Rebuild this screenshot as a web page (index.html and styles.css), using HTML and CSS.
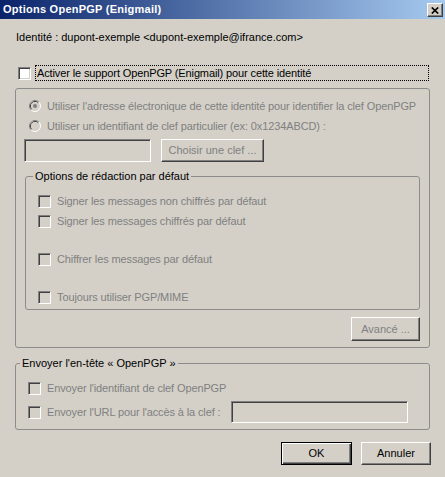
FILE: index.html
```html
<!DOCTYPE html>
<html lang="fr">
<head>
<meta charset="utf-8">
<title>Options OpenPGP (Enigmail)</title>
<link rel="stylesheet" href="styles.css">
</head>
<body>
<div class="titlebar">
  <span class="title">Options OpenPGP (Enigmail)</span>
  <span class="close"><svg width="8" height="7" viewBox="0 0 8 7"><path d="M0.8 0.5 L7.2 6.5 M7.2 0.5 L0.8 6.5" stroke="#000" stroke-width="1.7" fill="none"/></svg></span>
</div>

<div class="identity">Identité : dupont-exemple &lt;dupont-exemple@ifrance.com&gt;</div>

<div class="row enable"><span class="cb on"></span><span class="label focus">Activer le support OpenPGP (Enigmail) pour cette identité</span></div>

<div class="group main">
  <div class="row radio-row">
    <svg class="radio" width="12" height="12" viewBox="0 0 12 12">
      <path d="M2.11 9.89 A5.5 5.5 0 0 1 9.89 2.11" stroke="#808080" fill="none"/>
      <path d="M9.89 2.11 A5.5 5.5 0 0 1 2.11 9.89" stroke="#ffffff" fill="none"/>
      <path d="M2.82 9.18 A4.5 4.5 0 0 1 9.18 2.82" stroke="#404040" fill="none"/>
      <circle cx="6" cy="6" r="4" fill="#d4d0c8"/>
      <circle cx="6" cy="6" r="2" fill="#808080"/>
    </svg>
    <span class="label dis">Utiliser l'adresse électronique de cette identité pour identifier la clef OpenPGP</span>
  </div>
  <div class="row radio-row second">
    <svg class="radio" width="12" height="12" viewBox="0 0 12 12">
      <path d="M2.11 9.89 A5.5 5.5 0 0 1 9.89 2.11" stroke="#808080" fill="none"/>
      <path d="M9.89 2.11 A5.5 5.5 0 0 1 2.11 9.89" stroke="#ffffff" fill="none"/>
      <path d="M2.82 9.18 A4.5 4.5 0 0 1 9.18 2.82" stroke="#404040" fill="none"/>
      <circle cx="6" cy="6" r="4" fill="#d4d0c8"/>
    </svg>
    <span class="label dis">Utiliser un identifiant de clef particulier (ex: 0x1234ABCD) :</span>
  </div>
  <div class="keyrow">
    <span class="field keyfield"></span>
    <span class="btn disabled choose">Choisir une clef ...</span>
  </div>

  <fieldset class="group inner">
    <legend>Options de rédaction par défaut</legend>
    <div class="row cbrow first"><span class="cb"></span><span class="label dis">Signer les messages non chiffrés par défaut</span></div>
    <div class="row cbrow"><span class="cb"></span><span class="label dis">Signer les messages chiffrés par défaut</span></div>
    <div class="row cbrow far"><span class="cb"></span><span class="label dis">Chiffrer les messages par défaut</span></div>
    <div class="row cbrow far"><span class="cb"></span><span class="label dis">Toujours utiliser PGP/MIME</span></div>
  </fieldset>

  <div class="advrow"><span class="btn disabled adv">Avancé ...</span></div>
</div>

<fieldset class="group send">
  <legend>Envoyer l'en-tête « OpenPGP »</legend>
  <div class="row cbrow first"><span class="cb"></span><span class="label dis">Envoyer l'identifiant de clef OpenPGP</span></div>
  <div class="row cbrow url"><span class="cb"></span><span class="label dis">Envoyer l'URL pour l'accès à la clef :</span><span class="field urlfield"></span></div>
</fieldset>

<div class="buttons">
  <span class="btn default">OK</span>
  <span class="btn cancel">Annuler</span>
</div>
</body>
</html>
```

FILE: styles.css
```css
* { box-sizing: border-box; }
html, body { margin: 0; padding: 0; }
body {
  width: 445px;
  height: 477px;
  overflow: hidden;
  background: #d4d0c8;
  color: #000;
  font: 11px/13px "Liberation Sans", Arial, sans-serif;
}

.titlebar {
  height: 19px;
  display: flex;
  justify-content: space-between;
  align-items: flex-start;
  padding: 0 2px 0 3px;
  background: linear-gradient(to right, #0a246a, #a6caf0);
}
.title {
  color: #fff;
  font-weight: bold;
  font-size: 11px;
  letter-spacing: 0.25px;
  line-height: 19px;
}
.close {
  width: 16px;
  height: 14px;
  margin-top: 3px;
  display: flex;
  align-items: center;
  justify-content: center;
  padding-right: 1px;
  background: #d4d0c8;
  border: 1px solid;
  border-color: #fff #404040 #404040 #fff;
  box-shadow: inset -1px -1px #808080;
}
.close svg { display: block; }

.identity {
  margin: 12px 0 0 16px;
}

.row {
  display: flex;
  align-items: center;
  height: 16px;
}
.label {
  margin-left: 4px;
  padding: 0 1px;
  border: 1px solid transparent;
  white-space: nowrap;
  letter-spacing: -0.12px;
}
.dis { color: #808080; }

.cb {
  flex: none;
  width: 13px;
  height: 13px;
  background: #d4d0c8;
  border: 1px solid;
  border-color: #808080 #fff #fff #808080;
  box-shadow: inset 1px 1px #404040, inset -1px -1px #d4d0c8;
}
.cb.on { background: #fff; }

.enable {
  margin: 21px 16px 0 18px;
}
.enable .label.focus {
  flex: 1;
  border: 1px dotted #000;
  line-height: 14px;
}

.group {
  border: 1px solid #8c8c8c;
  border-radius: 3px;
}
fieldset.group {
  min-width: 0;
}
legend {
  padding: 0 2px;
  line-height: 13px;
}

.main {
  width: 415px;
  margin: 7px 0 0 15px;
  padding: 9px 9px 6px 8px;
}
.radio-row { margin-left: 5px; }
.radio-row.second { margin-top: 4px; }
.radio { flex: none; display: block; }

.keyrow {
  display: flex;
  gap: 10px;
  margin-top: 5px;
  height: 23px;
}
.field {
  flex: none;
  background: #d4d0c8;
  border: 1px solid;
  border-color: #808080 #fff #fff #808080;
  box-shadow: inset 1px 1px #404040, inset -1px -1px #d4d0c8;
}
.keyfield { width: 127px; height: 23px; }

.btn {
  flex: none;
  display: flex;
  align-items: center;
  justify-content: center;
  background: #d4d0c8;
  border: 1px solid;
  border-color: #fff #404040 #404040 #fff;
  box-shadow: inset -1px -1px #808080;
  white-space: nowrap;
}
.btn.disabled { color: #808080; }
.choose { width: 103px; height: 23px; }

fieldset.inner {
  margin: 8px 0 0 1px;
  padding: 0 0 4px 0;
}
.inner legend { margin-left: 7px; }
.cbrow { margin-left: 12px; }
.inner .cbrow.first { margin-top: 10px; }
.inner .cbrow { margin-top: 4px; }
.inner .cbrow.far { margin-top: 22px; }

.advrow {
  display: flex;
  justify-content: flex-end;
  margin-top: 7px;
}
.adv { width: 69px; height: 24px; padding-top: 1px; }

fieldset.send {
  width: 415px;
  margin: 9px 0 0 15px;
  padding: 0 0 6px 0;
}
.send legend { margin-left: 4px; }
.send .cbrow.first { margin-top: 10px; }
.send .cbrow.url {
  margin-top: 5px;
  height: 22px;
}
.urlfield {
  width: 177px;
  height: 22px;
  margin-left: auto;
  margin-right: 21px;
}

.buttons {
  display: flex;
  justify-content: flex-end;
  gap: 9px;
  margin-top: 12px;
  padding-right: 14px;
}
.buttons .btn { height: 23px; }
.default {
  width: 71px;
  border: 1px solid #000;
  box-shadow: inset 1px 1px #fff, inset -1px -1px #404040, inset -2px -2px #808080;
}
.cancel { width: 70px; }
```
